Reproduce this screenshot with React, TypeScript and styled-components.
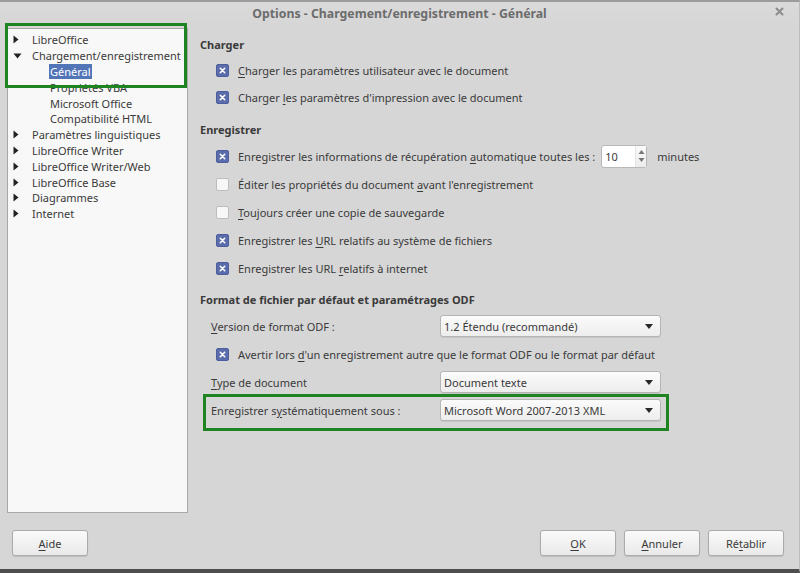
import React from "react";
import styled, { createGlobalStyle } from "styled-components";

const Global = createGlobalStyle`
  html, body { margin: 0; padding: 0; background: #d6d6d6; }
  body { font-family: "Noto Sans", "Open Sans", sans-serif; font-size: 11px; color: #3a3a3a; }
  * { box-sizing: border-box; }
`;

const Window = styled.div`
  width: 800px;
  height: 573px;
  display: flex;
  flex-direction: column;
  background: #d6d6d6;
  border-top: 2px solid #9c9c9c;
  border-bottom: 4px solid #4e4e4e;
  border-right: 1px solid #bdbdbd;
  overflow: hidden;
`;

const TitleBar = styled.div`
  height: 23px;
  position: relative;
  display: flex;
  align-items: center;
  justify-content: center;
  background: linear-gradient(#dadada, #d6d6d6);
`;

const Title = styled.div`
  font-size: 12.3px;
  font-weight: 700;
  color: #6c6c6c;
  margin-top: -1px;
`;

const Close = styled.div`
  position: absolute;
  right: 15px;
  top: 5px;
  display: flex;
`;

const Main = styled.div`
  display: flex;
  gap: 12px;
  padding: 3px 0 0 7px;
`;

const Tree = styled.div`
  position: relative;
  width: 181px;
  height: 485px;
  background: #f8f8f8;
  border: 1px solid #a9a9a9;
  padding-top: 3px;
`;

const TreeItem = styled.div<{ $depth: number }>`
  height: 15.8px;
  display: flex;
  align-items: center;
  padding-left: ${(p) => (p.$depth === 0 ? 5 : 41)}px;
  white-space: nowrap;
  color: #3a3a3a;
`;

const Arrow = styled.span`
  width: 18px;
  flex: none;
  display: inline-flex;
  align-items: center;
`;

const Label = styled.span<{ $selected?: boolean }>`
  padding: 0 1px;
  line-height: 15px;
  background: ${(p) => (p.$selected ? "#5275b8" : "transparent")};
  color: ${(p) => (p.$selected ? "#fff" : "inherit")};
`;

const Highlight = styled.div<{ $top: number; $left: number; $w: number; $h: number }>`
  position: absolute;
  top: ${(p) => p.$top}px;
  left: ${(p) => p.$left}px;
  width: ${(p) => p.$w}px;
  height: ${(p) => p.$h}px;
  border: 3px solid #1e8422;
  pointer-events: none;
`;

const Content = styled.div`
  flex: 1;
  padding-top: 8px;
  position: relative;
`;

const Heading = styled.div<{ $mt?: number }>`
  font-weight: 700;
  line-height: 18px;
  margin-top: ${(p) => p.$mt ?? 0}px;
  margin-bottom: 3px;
  color: #3a3a3a;
`;

const CheckRow = styled.div<{ $h?: number }>`
  height: ${(p) => p.$h ?? 28}px;
  display: flex;
  align-items: center;
  padding-left: 16px;
  gap: 9px;
  white-space: nowrap;
`;

const Box = styled.span<{ $checked: boolean }>`
  width: 13px;
  height: 13px;
  border-radius: 2px;
  flex: none;
  display: inline-flex;
  align-items: center;
  justify-content: center;
  background: ${(p) => (p.$checked ? "#5a6cab" : "#f7f7f7")};
  border: 1px solid ${(p) => (p.$checked ? "#4d5e9c" : "#bdbdbd")};
`;

const U = styled.span`
  text-decoration: underline;
  text-underline-offset: 2px;
`;

const Spin = styled.div`
  margin-left: -3px;
  width: 46px;
  height: 23px;
  display: flex;
  align-items: center;
  background: #fff;
  border: 1px solid #b8b8b8;
  border-radius: 3px;
  padding-left: 3px;
`;

const SpinValue = styled.span`
  flex: 1;
`;

const SpinArrows = styled.span`
  width: 11px;
  height: 100%;
  display: flex;
  align-items: center;
  justify-content: center;
  border-left: 1px solid #e4e4e4;
  background: linear-gradient(#fafafa, #ececec);
`;

const Minutes = styled.span`
  margin-left: 1px;
`;

const FormRow = styled.div`
  position: relative;
  height: 28px;
  display: flex;
  align-items: center;
  padding-left: 11px;
  white-space: nowrap;
`;

const FormLabel = styled.span`
  width: 229px;
`;

const Select = styled.div`
  width: 221px;
  height: 22px;
  display: flex;
  align-items: center;
  justify-content: space-between;
  padding: 0 7px 0 3px;
  border: 1px solid #b5b5b5;
  border-radius: 3px;
  background: linear-gradient(#fbfbfb, #ededed);
  box-shadow: 0 1px 0 rgba(0, 0, 0, 0.08);
`;

const Footer = styled.div`
  margin-top: 17px;
  display: flex;
  align-items: center;
  padding: 0 15px 0 12px;
  gap: 8px;
`;

const Spacer = styled.div`
  flex: 1;
`;

const Button = styled.div`
  width: 76px;
  height: 26px;
  display: flex;
  align-items: center;
  justify-content: center;
  border: 1px solid #ababab;
  border-radius: 3px;
  background: linear-gradient(#fafafa, #e9e9e9);
  box-shadow: 0 1px 1px rgba(0, 0, 0, 0.12);
  color: #3a3a3a;
`;

const RightTri = () => (
  <svg width="6" height="9" viewBox="0 0 6 9">
    <path d="M0.5 0.5 L5.5 4.5 L0.5 8.5 Z" fill="#222" />
  </svg>
);
const DownTri = () => (
  <svg width="9" height="6" viewBox="0 0 9 6">
    <path d="M0.5 0.5 L8.5 0.5 L4.5 5.5 Z" fill="#222" />
  </svg>
);
const SmallDown = () => (
  <svg width="8" height="5" viewBox="0 0 8 5">
    <path d="M0 0 L8 0 L4 5 Z" fill="#2a2a2a" />
  </svg>
);
const Cross = () => (
  <svg width="7" height="7" viewBox="0 0 7 7">
    <path d="M1.3 1.3 L5.7 5.7 M5.7 1.3 L1.3 5.7" stroke="#fff" strokeWidth="1.6" strokeLinecap="round" />
  </svg>
);
const CloseIcon = () => (
  <svg width="9" height="9" viewBox="0 0 9 9">
    <path d="M1.5 1.5 L7.5 7.5 M7.5 1.5 L1.5 7.5" stroke="#8c8c8c" strokeWidth="2" strokeLinecap="round" />
  </svg>
);
const SpinIcon = () => (
  <svg width="7" height="14" viewBox="0 0 7 14">
    <path d="M0.5 5 L6.5 5 L3.5 1 Z" fill="#777" />
    <path d="M0.5 9 L6.5 9 L3.5 13 Z" fill="#777" />
  </svg>
);

type Node = { label: string; depth: number; open?: boolean; selected?: boolean };
const tree: Node[] = [
  { label: "LibreOffice", depth: 0 },
  { label: "Chargement/enregistrement", depth: 0, open: true },
  { label: "Général", depth: 1, selected: true },
  { label: "Propriétés VBA", depth: 1 },
  { label: "Microsoft Office", depth: 1 },
  { label: "Compatibilité HTML", depth: 1 },
  { label: "Paramètres linguistiques", depth: 0 },
  { label: "LibreOffice Writer", depth: 0 },
  { label: "LibreOffice Writer/Web", depth: 0 },
  { label: "LibreOffice Base", depth: 0 },
  { label: "Diagrammes", depth: 0 },
  { label: "Internet", depth: 0 },
];

const Check = ({ checked }: { checked: boolean }) => (
  <Box $checked={checked}>{checked && <Cross />}</Box>
);

export default function App() {
  return (
    <>
      <Global />
      <Window>
        <TitleBar>
          <Title>Options - Chargement/enregistrement - Général</Title>
          <Close>
            <CloseIcon />
          </Close>
        </TitleBar>
        <Main>
          <Tree>
            {tree.map((n) => (
              <TreeItem key={n.label} $depth={n.depth}>
                {n.depth === 0 && <Arrow>{n.open ? <DownTri /> : <RightTri />}</Arrow>}
                <Label $selected={n.selected}>{n.label}</Label>
              </TreeItem>
            ))}
            <Highlight $top={-6} $left={-3} $w={182} $h={65} />
          </Tree>
          <Content>
            <Heading>Charger</Heading>
            <CheckRow $h={27}>
              <Check checked />
              <span>
                <U>C</U>harger les paramètres utilisateur avec le document
              </span>
            </CheckRow>
            <CheckRow $h={27}>
              <Check checked />
              <span>
                Charger <U>l</U>es paramètres d'impression avec le document
              </span>
            </CheckRow>

            <Heading $mt={10}>Enregistrer</Heading>
            <CheckRow>
              <Check checked />
              <span>
                Enregistrer les informations de récupération <U>a</U>utomatique toutes les :
              </span>
              <Spin>
                <SpinValue>10</SpinValue>
                <SpinArrows>
                  <SpinIcon />
                </SpinArrows>
              </Spin>
              <Minutes>minutes</Minutes>
            </CheckRow>
            <CheckRow>
              <Check checked={false} />
              <span>
                Éditer les propriétés du document <U>a</U>vant l'enregistrement
              </span>
            </CheckRow>
            <CheckRow>
              <Check checked={false} />
              <span>
                <U>T</U>oujours créer une copie de sauvegarde
              </span>
            </CheckRow>
            <CheckRow>
              <Check checked />
              <span>
                Enregistrer les <U>U</U>RL relatifs au système de fichiers
              </span>
            </CheckRow>
            <CheckRow>
              <Check checked />
              <span>
                Enregistrer les URL <U>r</U>elatifs à internet
              </span>
            </CheckRow>

            <Heading $mt={9}>Format de fichier par défaut et paramétrages ODF</Heading>
            <FormRow>
              <FormLabel>
                <U>V</U>ersion de format ODF :
              </FormLabel>
              <Select>
                <span>1.2 Étendu (recommandé)</span>
                <SmallDown />
              </Select>
            </FormRow>
            <CheckRow>
              <Check checked />
              <span>
                Avertir lors <U>d</U>'un enregistrement autre que le format ODF ou le format par défaut
              </span>
            </CheckRow>
            <FormRow>
              <FormLabel>
                <U>T</U>ype de document
              </FormLabel>
              <Select>
                <span>Document texte</span>
                <SmallDown />
              </Select>
            </FormRow>
            <FormRow>
              <FormLabel>
                Enregistrer s<U>y</U>stématiquement sous :
              </FormLabel>
              <Select>
                <span>Microsoft Word 2007-2013 XML</span>
                <SmallDown />
              </Select>
              <Highlight $top={-2} $left={3} $w={466} $h={37} />
            </FormRow>
          </Content>
        </Main>
        <Footer>
          <Button>
            <U>A</U>ide
          </Button>
          <Spacer />
          <Button>
            <U>O</U>K
          </Button>
          <Button>
            <U>A</U>nnuler
          </Button>
          <Button>
            Ré<U>t</U>ablir
          </Button>
        </Footer>
      </Window>
    </>
  );
}
